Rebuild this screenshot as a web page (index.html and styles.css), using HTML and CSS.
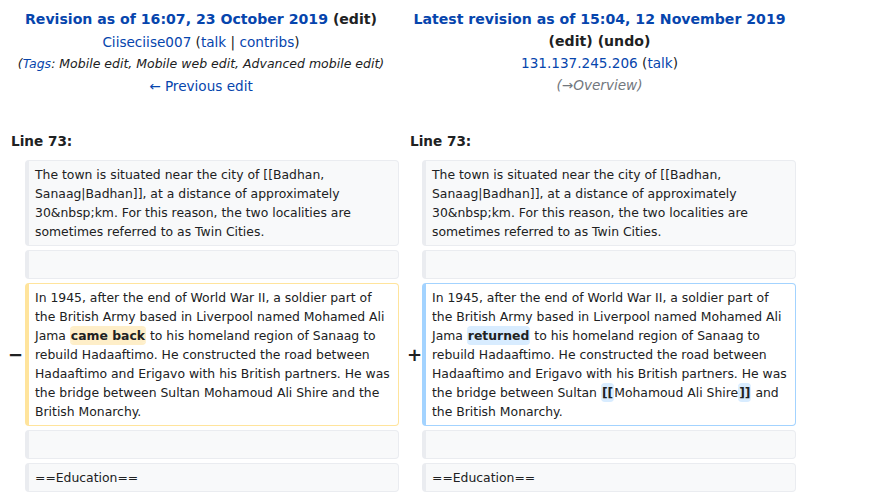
FILE: index.html
```html
<!DOCTYPE html>
<html lang="en">
<head>
<meta charset="utf-8">
<title>Diff</title>
<link rel="stylesheet" href="styles.css">
</head>
<body>
<div class="diff">
  <div class="hdr hdr-old">
    <div class="hline title"><a href="#">Revision as of 16:07, 23 October 2019</a> <span class="dark">(edit)</span></div>
    <div class="hline"><a href="#">Ciiseciise007</a> (<a href="#">talk</a> | <a href="#">contribs</a>)</div>
    <div class="hline tags">(<a href="#">Tags</a>: Mobile edit, Mobile web edit, Advanced mobile edit)</div>
    <div class="hline"><a href="#">← Previous edit</a></div>
  </div>
  <div class="hdr hdr-new">
    <div class="hline title title-new"><a href="#">Latest revision as of 15:04, 12 November 2019</a> <span class="dark">(edit)</span> <span class="dark">(undo)</span></div>
    <div class="hline"><a href="#">131.137.245.206</a> (<a href="#">talk</a>)</div>
    <div class="hline summary">(→Overview)</div>
  </div>

  <div class="lineno lineno-old">Line 73:</div>
  <div class="lineno lineno-new">Line 73:</div>

  <div class="line ctx side-old">The town is situated near the city of [[Badhan, Sanaag|Badhan]], at a distance of approximately 30&amp;nbsp;km. For this reason, the two localities are sometimes referred to as Twin Cities.</div>
  <div class="line ctx side-new">The town is situated near the city of [[Badhan, Sanaag|Badhan]], at a distance of approximately 30&amp;nbsp;km. For this reason, the two localities are sometimes referred to as Twin Cities.</div>

  <div class="line ctx side-old">&nbsp;</div>
  <div class="line ctx side-new">&nbsp;</div>

  <div class="marker marker-old">−</div>
  <div class="line del side-old">In 1945, after the end of World War II, a soldier part of the British Army based in Liverpool named Mohamed Ali Jama <span class="change">came back</span> to his homeland region of Sanaag to rebuild Hadaaftimo. He constructed the road between Hadaaftimo and Erigavo with his British partners. He was the bridge between Sultan Mohamoud Ali Shire and the British Monarchy.</div>
  <div class="marker marker-new">+</div>
  <div class="line add side-new">In 1945, after the end of World War II, a soldier part of the British Army based in Liverpool named Mohamed Ali Jama <span class="change">returned</span> to his homeland region of Sanaag to rebuild Hadaaftimo. He constructed the road between Hadaaftimo and Erigavo with his British partners. He was the bridge between Sultan <span class="change">[[</span>Mohamoud Ali Shire<span class="change">]]</span> and the British Monarchy.</div>

  <div class="line ctx side-old">&nbsp;</div>
  <div class="line ctx side-new">&nbsp;</div>

  <div class="line ctx side-old">==Education==</div>
  <div class="line ctx side-new">==Education==</div>
</div>
</body>
</html>
```
FILE: styles.css
```css
html, body {
  margin: 0;
  padding: 0;
  background: #fff;
}

body {
  font-family: "DejaVu Sans", sans-serif;
  color: #202122;
  font-size: 13.6px;
}

a {
  color: #0645ad;
  text-decoration: none;
}

.diff {
  display: grid;
  grid-template-columns: 17px 374px 23px 374px;
  row-gap: 4px;
  margin: 8px 0 0 8px;
}

.hdr {
  text-align: center;
  line-height: 22px;
}

.hdr-old {
  grid-column: 1 / 3;
  padding-right: 5px;
}

.hdr-new {
  grid-column: 3 / 5;
  padding-left: 4px;
}

.hline.title {
  font-weight: bold;
  font-size: 14.1px;
  margin-bottom: 1px;
}

.hline.title-new {
  margin-bottom: 0;
}

.dark {
  color: #202122;
}

.tags {
  font-style: italic;
  font-size: 12.5px;
}

.summary {
  font-style: italic;
  font-size: 13.6px;
  color: #72777d;
}

.lineno {
  font-weight: bold;
  line-height: 22px;
  margin-top: 29px;
  margin-bottom: 4px;
}

.lineno-old {
  grid-column: 1 / 3;
  padding-left: 3px;
}

.lineno-new {
  grid-column: 3 / 5;
  padding-left: 11px;
}

.line {
  font-size: 12.4px;
  line-height: 19px;
  border: 1px solid #eaecf0;
  border-left-width: 4px;
  border-radius: 4px;
  padding: 4px 6px 4px 6px;
  background: #f8f9fa;
  white-space: pre-wrap;
  overflow-wrap: break-word;
  color: #202122;
}

.side-old {
  grid-column: 2;
}

.side-new {
  grid-column: 4;
}

.del {
  background: #fff;
  border-color: #ffe49c;
}

.add {
  background: #fff;
  border-color: #a3d3ff;
}

.change {
  font-weight: bold;
  border-radius: 4px;
  padding: 0 1px;
}

.del .change {
  background: #feeec8;
  box-shadow: 0 2px 0 #feeec8, 0 -2px 0 #feeec8;
}

.add .change {
  background: #d8ecff;
  box-shadow: 0 2px 0 #d8ecff, 0 -2px 0 #d8ecff;
}

.marker {
  align-self: center;
  font-weight: bold;
  font-size: 18px;
  line-height: 20px;
  text-align: right;
  color: #202122;
}

.marker-old {
  grid-column: 1;
  padding-right: 3px;
}

.marker-new {
  grid-column: 3;
  padding-right: 0;
}
```
